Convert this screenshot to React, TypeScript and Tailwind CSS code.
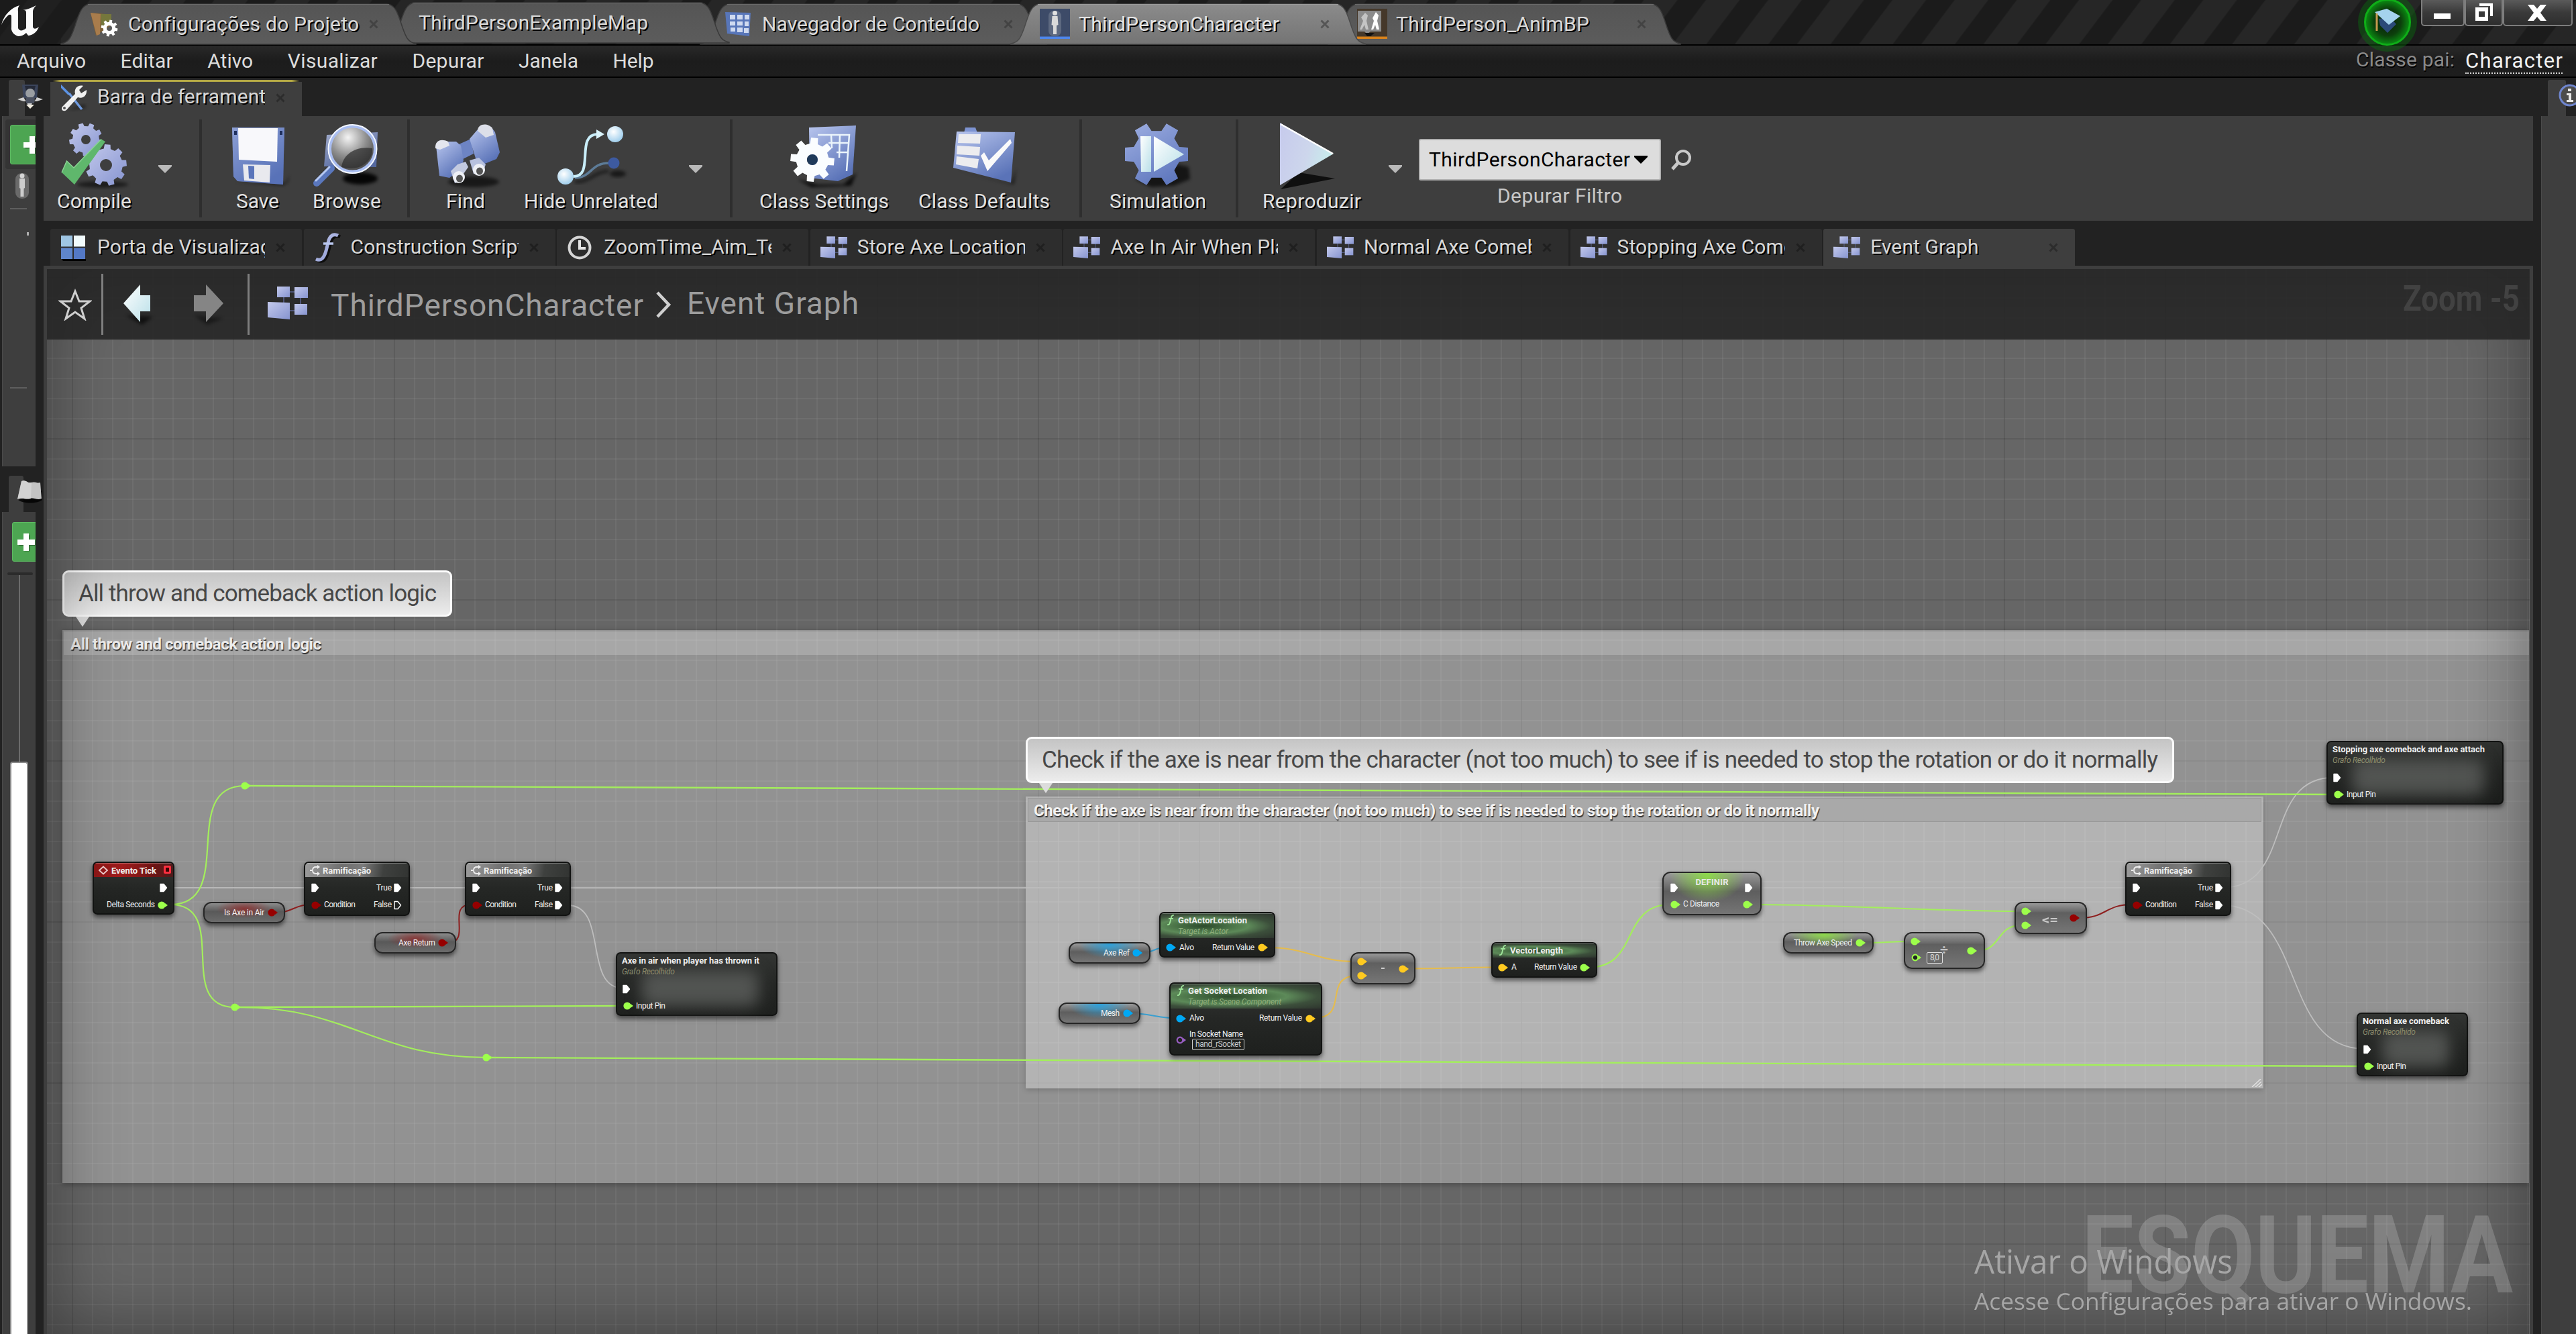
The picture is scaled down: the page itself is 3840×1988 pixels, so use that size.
import React, { useLayoutEffect, useRef, useState } from "react";

/* ---------- text fitted to a width ---------- */

function T({
  children,
  w,
  className = "",
  stretch = false,
  size,
}: {
  children: string;
  w: number;
  className?: string;
  stretch?: boolean;
  size?: number;
}) {
  const ref = useRef<HTMLSpanElement>(null);
  const [fit, setFit] = useState<{ ls: number; sx: number }>({ ls: 0, sx: 1 });
  useLayoutEffect(() => {
    if (!ref.current) return;
    const natural = ref.current.getBoundingClientRect().width;
    if (stretch) setFit({ ls: 0, sx: w / natural });
    else setFit({ ls: (w - natural) / Math.max(1, children.length - 1), sx: 1 });
  }, []);
  return (
    <span className={"block leading-none whitespace-nowrap " + className} style={{ width: w, fontSize: size }}>
      <span
        ref={ref}
        className="inline-block origin-left"
        style={{ letterSpacing: fit.ls, transform: fit.sx === 1 ? undefined : `scaleX(${fit.sx})` }}
      >
        {children}
      </span>
    </span>
  );
}

const SH = "[text-shadow:2px_2px_0_#000]";

/* ---------- icons ---------- */

function gear(cx: number, cy: number, r: number, n: number, depth = 0.2, off = 0) {
  const ri = r * (1 - depth);
  const step = (Math.PI * 2) / n;
  const p: string[] = [];
  for (let i = 0; i < n; i++) {
    const a = i * step + off;
    const pts: [number, number][] = [
      [a - step * 0.3, ri],
      [a - step * 0.2, r],
      [a + step * 0.2, r],
      [a + step * 0.3, ri],
    ];
    for (const [t, q] of pts) p.push(`${(cx + Math.cos(t) * q).toFixed(1)} ${(cy + Math.sin(t) * q).toFixed(1)}`);
  }
  return "M" + p.join("L") + "Z";
}

const Defs = () => (
  <svg className="absolute size-0">
    <defs>
      <linearGradient id="blu" x1="0" y1="0" x2="0.6" y2="1">
        <stop offset="0" stopColor="#b9c6ee" />
        <stop offset="1" stopColor="#5a73b8" />
      </linearGradient>
      <linearGradient id="lav" x1="0" y1="0" x2="1" y2="1">
        <stop offset="0" stopColor="#c3c9ec" />
        <stop offset="1" stopColor="#8694d0" />
      </linearGradient>
      <linearGradient id="ice" x1="0" y1="0" x2="1" y2="1">
        <stop offset="0" stopColor="#ffffff" />
        <stop offset="1" stopColor="#b9dfe8" />
      </linearGradient>
      <linearGradient id="play" x1="0" y1="0" x2="1" y2="0.3">
        <stop offset="0" stopColor="#c6caec" />
        <stop offset="0.6" stopColor="#cdd6ec" />
        <stop offset="1" stopColor="#c8ecec" />
      </linearGradient>
      <radialGradient id="lens" cx="0.4" cy="0.25" r="0.9">
        <stop offset="0" stopColor="#f4f4f4" />
        <stop offset="0.45" stopColor="#8f8f8f" />
        <stop offset="1" stopColor="#2a2a2a" />
      </radialGradient>
      <radialGradient id="ball" cx="0.4" cy="0.35" r="0.8">
        <stop offset="0" stopColor="#ffffff" />
        <stop offset="1" stopColor="#8cc4e8" />
      </radialGradient>
      <linearGradient id="tabA" x1="0" y1="0" x2="0" y2="1">
        <stop offset="0" stopColor="#8b8b8b" />
        <stop offset="1" stopColor="#747474" />
      </linearGradient>
      <linearGradient id="tabI" x1="0" y1="0" x2="0" y2="1">
        <stop offset="0" stopColor="#555555" />
        <stop offset="1" stopColor="#5c5c5c" />
      </linearGradient>
      <filter id="soft" x="-30%" y="-30%" width="160%" height="160%">
        <feGaussianBlur stdDeviation="2.5" />
      </filter>
    </defs>
  </svg>
);

const Ic = ({ children }: { children: React.ReactNode }) => (
  <svg viewBox="0 0 100 100" className="size-[100px] shrink-0 overflow-visible">
    {children}
  </svg>
);

const CompileIcon = () => (
  <Ic>
    <ellipse cx="62" cy="92" rx="38" ry="5" fill="#000" opacity=".55" filter="url(#soft)" />
    <path d={gear(37, 25, 25, 9, 0.2, 0.2) + "M44 25a7 7 0 1 0-14 0a7 7 0 1 0 14 0Z"} fill="url(#lav)" fillRule="evenodd" />
    <path d={gear(67, 63, 31, 9, 0.2, -0.1) + "M76 63a9 9 0 1 0-18 0a9 9 0 1 0 18 0Z"} fill="url(#lav)" fillRule="evenodd" />
    <path d="M1 74L8.500 57L19 67L60 24.500L66 28L20 92Z" fill="#5fb76c" />
    <path d="M1 74L8.500 57L19 67L60 24.500" fill="none" stroke="#8bd394" strokeWidth="1.500" />
  </Ic>
);
const SaveIcon = () => (
  <Ic>
    <path d="M16 88L90 93L98 78L94 90Z" fill="#000" opacity=".7" filter="url(#soft)" />
    <path d="M12 7H90L88 92L20 87L14 80Z" fill="url(#blu)" />
    <path d="M12 7H90L88 92L20 87L14 80Z" fill="#5672b8" opacity=".45" />
    <path d="M21 8H80L79 58L22 55Z" fill="#f8f8fb" />
    <path d="M28 62L69 63L68 89L30 86Z" fill="#e9e9ee" />
    <path d="M36 64L45 64.500L45 84L37 83Z" fill="#5a74ba" />
    <rect x="15" y="12" width="4" height="6" fill="#20305e" />
    <rect x="83" y="12" width="4" height="6" fill="#20305e" />
  </Ic>
);
const BrowseIcon = () => (
  <Ic>
    <ellipse cx="70" cy="83" rx="26" ry="9" fill="#000" opacity=".9" filter="url(#soft)" />
    <path d="M20 18L96 14L94 66L16 65Z" fill="url(#blu)" opacity=".8" />
    <path d="M5 90L27 68" stroke="#5a77bd" strokeWidth="10" strokeLinecap="round" />
    <path d="M4 86L24 66" stroke="#b5c8f2" strokeWidth="3" strokeLinecap="round" />
    <circle cx="58.500" cy="39" r="34" fill="url(#lens)" stroke="#a9bdf0" strokeWidth="5" />
    <circle cx="58.500" cy="39" r="36" fill="none" stroke="#f2f6ff" strokeWidth="2" />
    <path d="M42 66C44 48 62 34 88 38C90 56 70 74 42 66Z" fill="#2b2b2b" opacity=".7" />
  </Ic>
);
const FindIcon = () => (
  <Ic>
    <ellipse cx="62" cy="88" rx="38" ry="8" fill="#000" opacity=".6" filter="url(#soft)" />
    <path d="M40 32L58 24L62 46L46 54Z" fill="#6d84c4" />
    <path d="M6 34L12 28L36 28L43 34L47 56L42 70L26 82L11 79Z" fill="url(#blu)" />
    <path d="M5 38C4 26 14 23 24 28L26 34L12 40Z" fill="#e4e6ee" />
    <path d="M56 24L68 10L88 6L94 14L101 44L96 54L76 62L66 56Z" fill="url(#blu)" />
    <path d="M68 12C68 0 84 0 90 8L92 18L80 22Z" fill="#dcdfe9" />
    <path d="M28 72L38 62L50 58L54 66L47 76L47 86L34 90Z" fill="#c3cae0" />
    <path d="M56 56L70 52L80 62L76 74L62 76Z" fill="#b7c1de" />
    <ellipse cx="40" cy="81" rx="9" ry="9" fill="#eef0f5" />
    <ellipse cx="41" cy="83" rx="5" ry="5.500" fill="#555" />
    <ellipse cx="70" cy="70" rx="9" ry="9" fill="#eef0f5" />
    <ellipse cx="71" cy="72" rx="5" ry="5.500" fill="#555" />
  </Ic>
);
const HideIcon = () => (
  <Ic>
    <path d="M26 88C50 88 52 74 76 72" stroke="#000" opacity=".5" strokeWidth="5" fill="none" filter="url(#soft)" />
    <ellipse cx="90" cy="76" rx="12" ry="5" fill="#000" opacity=".6" filter="url(#soft)" />
    <path d="M26 82C50 82 50 60 76 60" stroke="#5d7c98" strokeWidth="3.500" fill="none" />
    <circle cx="84" cy="60" r="8.500" fill="#3d5aa0" />
    <path d="M24 80C56 80 26 17 60 17" stroke="#c9eefa" strokeWidth="4" fill="none" />
    <path d="M58 10L70 17L58 24Z" fill="#d9f3fb" />
    <circle cx="12" cy="80" r="12" fill="url(#ball)" />
    <circle cx="86" cy="17" r="12" fill="url(#ball)" />
  </Ic>
);
const SettingsIcon = () => (
  <Ic>
    <path d="M10 84L40 92L78 92L98 74L90 94L30 96Z" fill="#000" opacity=".8" filter="url(#soft)" />
    <path d="M27 7L97 4L92 77L70 87L28 82Z" fill="url(#blu)" />
    <path d="M40 18H87L83 72M60 18L61 38M73 18L72 52M56 30H86M68 44H85" stroke="#eaf4fb" strokeWidth="2.500" fill="none" />
    <path d={gear(32, 55, 33, 8, 0.26, 0.1) + "M40 55a8 8 0 1 0-16 0a8 8 0 1 0 16 0Z"} fill="#fafdff" fillRule="evenodd" />
    <circle cx="32" cy="55" r="8" fill="#1f3a5a" />
  </Ic>
);
const DefaultsIcon = () => (
  <Ic>
    <path d="M8 70L90 92L98 68L94 92Z" fill="#000" opacity=".7" filter="url(#soft)" />
    <path d="M20 15L22 7H37L40 15Z" fill="#7e94d2" />
    <path d="M9 13L96 14L90 89L4 67Z" fill="url(#blu)" />
    <path d="M12 17H45L44 31L11 30Z M10 34L44 36L43 49L9 47Z M9 50L42 54L40 68L8 62Z" fill="#ececef" />
    <path d="M45 49L50 44L57 56L89 24L91 30L55 72Z" fill="#fafafa" />
  </Ic>
);
const SimIcon = () => (
  <Ic>
    <path d="M16 84L40 96L74 94L98 84L96 66L80 62Z" fill="#000" opacity=".65" filter="url(#soft)" />
    <path d={gear(48, 47, 48, 6, 0.26, 0)} fill="url(#blu)" />
    <path d={gear(48, 47, 48, 6, 0.26, 0)} fill="#6d84cc" opacity=".35" />
    <path d="M24 20H40V73H25Z" fill="url(#ice)" />
    <path d="M44 20L89 47L44 73Z" fill="url(#ice)" />
  </Ic>
);
const PlayIcon = () => (
  <Ic>
    <path d="M3 99L84 83L30 74Z" fill="#000" opacity=".75" />
    <path d="M2 0L82 46L2 93Z" fill="url(#play)" />
    <path d="M3 2L81 46" stroke="#fff" strokeWidth="2.500" />
  </Ic>
);

const Blocks = ({ className }: { className: string }) => (
  <svg viewBox="0 0 60 50" className={className}>
    <path d="M33 8H40M33 36H40M24 16V24M49 16V26" stroke="#5a6390" strokeWidth="1.500" />
    <rect x="14" y="0" width="19" height="16" fill="url(#lav)" />
    <rect x="40" y="1" width="20" height="16" fill="url(#lav)" />
    <path d="M0 23L33 24V49L0 46Z" fill="url(#lav)" />
    <rect x="40" y="26" width="19" height="16" fill="url(#lav)" />
  </svg>
);
const PanesIcon = () => (
  <svg viewBox="0 0 40 40" className="size-10 overflow-visible">
    <path d="M2 37H38V40H4Z" fill="#000" />
    <rect x="1" y="2" width="17" height="16.500" fill="#9fc6e4" />
    <rect x="20" y="2" width="17" height="16.500" fill="#f1fbfd" />
    <rect x="1" y="20.500" width="17" height="16.500" fill="#5f86cc" />
    <rect x="20" y="20.500" width="17" height="16.500" fill="#5479c6" />
  </svg>
);
const FnIcon = () => (
  <svg viewBox="0 0 40 40" className="size-10 overflow-visible">
    <path d="M3 37C11 41 15 35 18 25L22 9C25 1 30 -1 36 2" stroke="#000" opacity=".7" strokeWidth="5" fill="none" transform="translate(3 2)" />
    <path d="M3 37C11 41 15 35 18 25L22 9C25 1 30 -1 36 2" stroke="url(#lav)" strokeWidth="5" fill="none" />
    <path d="M14 14H29" stroke="#b9c6ee" strokeWidth="3.500" />
  </svg>
);
const ClockIcon = () => (
  <svg viewBox="0 0 40 40" className="size-10 overflow-visible">
    <circle cx="19" cy="20" r="15.500" fill="none" stroke="#d5d5d5" strokeWidth="4" />
    <path d="M19 9V21H28" fill="none" stroke="#e4e4e4" strokeWidth="4" />
  </svg>
);
const ToolsIcon = () => (
  <svg viewBox="0 0 40 40" className="size-10 overflow-visible">
    <path d="M10 38L36 30L38 34Z" fill="#000" opacity=".6" filter="url(#soft)" />
    <path d="M1 0L14 13L12 16L1 5Z" fill="#5b93e6" />
    <path d="M13 13L32 37" stroke="#6f9be0" strokeWidth="3.500" />
    <path d="M3 33L22 14C20 6 26 0 34 2L28 8L31 13L39 8C40 16 34 22 26 19L9 38C5 41 0 38 3 33Z" fill="#f1f1f1" />
    <circle cx="6" cy="35" r="2" fill="#555" />
  </svg>
);
const CloseX = ({ className = "" }: { className?: string }) => (
  <svg viewBox="0 0 16 16" className={"size-4 shrink-0 " + className}>
    <path d="M2.500 2.500L13.500 13.500M13.500 2.500L2.500 13.500" stroke="currentColor" strokeWidth="3" />
  </svg>
);
const Caret = ({ className = "" }: { className?: string }) => (
  <svg viewBox="0 0 20 12" className={"h-3 w-5 shrink-0 " + className}>
    <path d="M0 0H20V2L10 12L0 2Z" fill="currentColor" />
  </svg>
);
const FolderIcon = () => (
  <svg viewBox="0 0 40 36" className="h-9 w-10 overflow-visible">
    <path d="M0 1L14 2L31 4L30 20L8 35Z" fill="#7d5f36" />
    <path d="M0 1L15 3L14 33L9 35Z" fill="#a87c4c" />
    <path d="M15 3L31 3L31 14L16 24Z" fill="#75773c" />
    <path d={gear(28, 24, 12.5, 8, 0.26, 0.2) + "M32 24a4 4 0 1 0-8 0a4 4 0 1 0 8 0Z"} fill="#fff" fillRule="evenodd" />
  </svg>
);
const BrowserIcon = () => (
  <svg viewBox="0 0 40 36" className="h-9 w-10 overflow-visible">
    <path d="M1 0L39 1L37 36L4 32Z" fill="#5876b9" />
    <path d="M8 4H16V11H8ZM19 4H27V11H19ZM30 4H37V11H30ZM8 14H16V20H8ZM19 14H27V20H19ZM30 14H36V21H30ZM9 23H16V29H9ZM19 23H27V30H19ZM29 24H36V31H29Z" fill="#cfdaf0" />
  </svg>
);
const PawnIcon = () => (
  <svg viewBox="0 0 45 45" className="size-[45px]">
    <rect width="45" height="45" fill="#3d4b68" />
    <rect x="13" y="3" width="19" height="38" rx="8" fill="#5d6980" />
    <circle cx="22.500" cy="6.500" r="3.500" fill="#e1e1e1" />
    <path d="M18.500 11H26.500L27.500 24L25 25V38H20V25L17.500 24Z" fill="#dadada" />
    <rect y="41.500" width="45" height="3.500" fill="#4e86ea" />
  </svg>
);
const AnimIcon = () => (
  <svg viewBox="0 0 45 45" className="size-[45px]">
    <rect width="45" height="45" fill="#45382a" />
    <path d="M1 3H36V34H20L15 38L11 34H1Z" fill="#8b8b8b" />
    <path d="M28 5L32 10L30 18L33 31H29L27 24L24 31H21L25 18L23 14Z" fill="#fff" />
    <path d="M12 6L16 10L14 18L17 31H13L11 24L7 31H4L9 18L6 13Z" fill="#c4c4c4" />
    <path d="M11 36H26L20 41H15Z" fill="#111" />
    <rect y="41.500" width="45" height="3.500" fill="#d8821c" />
  </svg>
);
const Logo = () => (
  <svg viewBox="0 0 60 60" className="h-[60px] w-[60px]">
    <path
      d="M2 37C6 22 16 12 29 8C26 12 27 15 27 18V42C29 47 34 46 39 42V19C39 15 37 15 34 15C42 14 48 11 54 8C50 12 49 15 49 18V40C50 44 54 43 58 40C55 48 48 53 42 53L39 49C35 53 31 54 27 54C20 52 16 46 17 40V25C17 21 14 21 11 24C7 28 4 32 2 37Z"
      fill="#fbfbfb"
    />
  </svg>
);

/* ---------- title bar ---------- */

function TitleTab({
  w,
  className,
  active = false,
  children,
}: {
  w: number;
  className: string;
  active?: boolean;
  children: React.ReactNode;
}) {
  return (
    <div className={"relative flex h-[61px] shrink-0 items-center " + className} style={{ width: w }}>
      <svg className="absolute inset-0 h-full w-full overflow-visible" viewBox={`0 0 ${w} 61`}>
        <path
          d={`M0 60C12 58 15 50 20 36C26 18 30 1 44 1H${w - 44}C${w - 30} 1 ${w - 26} 18 ${w - 20} 36C${w - 15} 50 ${w - 12} 58 ${w} 60V61H0Z`}
          fill={active ? "url(#tabA)" : "url(#tabI)"}
          stroke={active ? "#4a4a4a" : "#3a3a3a"}
          strokeWidth="1.500"
        />
        <path d={`M40 1.500H${w - 40}`} stroke={active ? "#9a9a9a" : "#6a6a6a"} strokeWidth="1" />
      </svg>
      {children}
    </div>
  );
}

function TitleBar() {
  return (
    <div className="relative flex h-[66px] shrink-0 items-end bg-[repeating-linear-gradient(127deg,#1b1b1b_0px,#1b1b1b_32px,#262626_34px,#262626_72px,#1b1b1b_74px)]">
      <div className="flex h-full w-[91px] items-start bg-[#1c1c1c]/60">
        <Logo />
      </div>
      <TitleTab w={529} className="z-[5] pl-11">
        <div className="relative">
          <FolderIcon />
        </div>
        <T w={343} className={"relative ml-4 text-[30px] text-[#dadada] " + SH}>Configurações do Projeto</T>
        <CloseX className="relative ml-[15px] text-[#434343]" />
      </TitleTab>
      <TitleTab w={512} className="z-[4] -ml-[45px] mb-[2px] pl-[49px]">
        <T w={342} className={"relative text-[30px] text-[#dadada] " + SH}>ThirdPersonExampleMap</T>
      </TitleTab>
      <TitleTab w={516} className="z-[3] -ml-[43px] pl-[36px]">
        <div className="relative">
          <BrowserIcon />
        </div>
        <T w={324} className={"relative ml-[16px] text-[30px] text-[#dadada] " + SH}>Navegador de Conteúdo</T>
        <CloseX className="relative ml-[35px] text-[#434343]" />
      </TitleTab>
      <TitleTab w={528} active className="z-[6] -ml-[53px] pl-[43px]">
        <div className="relative">
          <PawnIcon />
        </div>
        <T w={299} className={"relative ml-[13px] text-[30px] text-[#e4e4e4] " + SH}>ThirdPersonCharacter</T>
        <CloseX className="relative ml-[60px] text-[#555555]" />
      </TitleTab>
      <TitleTab w={525} className="z-[5] -ml-[55px] pl-[43px]">
        <div className="relative">
          <AnimIcon />
        </div>
        <T w={288} className={"relative ml-[13px] text-[30px] text-[#dadada] " + SH}>ThirdPerson_AnimBP</T>
        <CloseX className="relative ml-[70px] text-[#434343]" />
      </TitleTab>
      <div className="ml-auto flex h-full items-start pr-[5px]">
        <div className="relative z-10 h-[66px] w-[94px]">
          <svg viewBox="0 0 94 80" className="absolute top-0 left-0 h-20 w-[94px]">
            <defs>
              <radialGradient id="tut">
                <stop offset="0" stopColor="#0a1a0a" />
                <stop offset="0.6" stopColor="#0c400c" />
                <stop offset="1" stopColor="#0a8f12" />
              </radialGradient>
            </defs>
            <circle cx="44" cy="33" r="44" fill="#0c6a10" opacity=".45" />
            <circle cx="44" cy="33" r="33.500" fill="url(#tut)" stroke="#0fae18" strokeWidth="3" />
            <path d="M31 28L48 26L57 36L44 49L33 38Z" fill="#2b4a78" />
            <path d="M25 18L43 13L63 24L46 37Z" fill="#a5d3ee" />
            <path d="M28 20V46" stroke="#c79a4e" strokeWidth="3" />
          </svg>
        </div>
        {[
          { w: 65, icon: <path d="M19 20H44V28H19Z" fill="#fff" /> },
          { w: 57, icon: <path d="M22 5H42V24H38V9H22ZM16 11H35V31H16ZM21 17V25H30V17Z" fill="#fff" fillRule="evenodd" /> },
          { w: 104, icon: <path d="M37 7H46L51 13L56 7H65L56 19L65 31H56L51 25L46 31H37L46 19Z" fill="#fff" /> },
        ].map((b, i) => (
          <div
            key={i}
            className="h-[39px] rounded-b-[5px] border-2 border-t-0 border-[#7d7d7d] bg-gradient-to-b from-[#5a5a5a] via-[#3a3a3a] to-[#2e2e2e]"
            style={{ width: b.w }}
          >
            <svg className="-ml-[2px] block h-[37px] overflow-visible" style={{ width: b.w }} viewBox={`0 0 ${b.w} 37`}>
              {b.icon}
            </svg>
          </div>
        ))}
      </div>
    </div>
  );
}

const MENU: [string, number][] = [
  ["Arquivo", 103],
  ["Editar", 78],
  ["Ativo", 68],
  ["Visualizar", 134],
  ["Depurar", 107],
  ["Janela", 89],
  ["Help", 61],
];

function MenuBar() {
  return (
    <div className="flex h-[50px] shrink-0 items-center gap-[51.600px] border-y-2 border-black bg-gradient-to-b from-[#292929] via-[#1c1c1c] to-[#1e1e1e] pr-[20px] pl-[25px]">
      {MENU.map(([t, w]) => (
        <T key={t} w={w} className="text-[30px] text-[#dcdcdc]">
          {t}
        </T>
      ))}
      <div className="ml-auto flex items-center gap-[16px]">
        <T w={147} className="-mt-[4px] text-[30px] text-[#8a8a8a] [text-shadow:1px_2px_0_#000]">Classe pai:</T>
        <div className="mt-[2px] border-b-2 border-dotted border-[#d8d8d8] pb-[2px]">
          <T w={145} className="text-[31px] text-[#f2f2f2]">Character</T>
        </div>
      </div>
    </div>
  );
}

/* ---------- toolbar ---------- */

function Tool({ icon, label, lw, className }: { icon: React.ReactNode; label: string; lw: number; className: string }) {
  return (
    <div className={"flex shrink-0 flex-col items-center pt-[10px] " + className}>
      {icon}
      <T w={lw} className={"mt-[2px] text-[30px] text-[#e2e2e2] " + SH}>{label}</T>
    </div>
  );
}
const Sep = ({ className }: { className: string }) => (
  <div className={"mt-[5px] h-[146px] w-1 shrink-0 bg-[#2e2e2e] " + className} />
);

function Toolbar() {
  return (
    <div className="flex h-[156px] w-[3711px] shrink-0 bg-[#3e3e3e]">
      <Tool icon={<CompileIcon />} label="Compile" lw={111} className="ml-[20px] w-[111px]" />
      <Caret className="mt-[73px] ml-[40px] text-[#b9b9b9]" />
      <Sep className="ml-[41px]" />
      <Tool icon={<SaveIcon />} label="Save" lw={64} className="ml-[33px] w-[100px]" />
      <Tool icon={<BrowseIcon />} label="Browse" lw={102} className="ml-[31px] w-[104px]" />
      <Sep className="ml-[38px]" />
      <Tool icon={<FindIcon />} label="Find" lw={58} className="ml-[33px] w-[100px]" />
      <Tool icon={<HideIcon />} label="Hide Unrelated" lw={200} className="ml-[37px] w-[200px]" />
      <Caret className="mt-[73px] ml-[46px] text-[#b9b9b9]" />
      <Sep className="ml-[41px]" />
      <Tool icon={<SettingsIcon />} label="Class Settings" lw={193} className="ml-[40px] w-[193px]" />
      <Tool icon={<DefaultsIcon />} label="Class Defaults" lw={196} className="ml-[44px] w-[196px]" />
      <Sep className="ml-[44px]" />
      <Tool icon={<SimIcon />} label="Simulation" lw={144} className="ml-[41px] w-[144px]" />
      <Sep className="ml-[44px]" />
      <Tool icon={<PlayIcon />} label="Reproduzir" lw={147} className="ml-[36px] w-[147px]" />
      <Caret className="mt-[73px] ml-[41px] text-[#b9b9b9]" />
      <div className="ml-[25px] flex w-[420px] flex-col pt-[34px]">
        <div className="flex items-center">
          <div className="flex h-[62px] w-[361px] shrink-0 items-center rounded-[3px] border-2 border-[#b0b0b0] bg-[#dddddd] pl-[13px]">
            <T w={300} className="text-[30px] text-black">ThirdPersonCharacter</T>
            <Caret className="ml-[6px] text-black" />
          </div>
          <svg viewBox="0 0 32 32" className="ml-[14px] h-8 w-8">
            <circle cx="19" cy="13" r="10" fill="none" stroke="#c9c9c9" strokeWidth="4" />
            <path d="M12 20L3 30" stroke="#c9c9c9" strokeWidth="5" />
          </svg>
        </div>
        <T w={186} className="mt-[8px] self-center text-[30px] text-[#c8c8c8]">Depurar Filtro</T>
      </div>
    </div>
  );
}

function GraphTab({ icon, label, active = false }: { icon: React.ReactNode; label: string; active?: boolean }) {
  return (
    <div
      className={
        "mr-[2.600px] flex h-full w-[375px] shrink-0 items-center rounded-t-[3px] pl-[15px] " +
        (active ? "bg-[#3e3e3e]" : "bg-[#2d2d2d]")
      }
    >
      {icon}
      <div className="ml-[15px] h-9 w-[250px] overflow-hidden">
        <span className={"block pt-[2px] text-[30px] leading-none tracking-[0.1px] whitespace-nowrap text-[#d8d8d8] " + SH}>
          {label}
        </span>
      </div>
      <CloseX className={"ml-[15px] " + (active ? "text-[#2c2c2c]" : "text-[#1f1f1f]")} />
    </div>
  );
}

/* ---------- graph pieces ---------- */

const GREEN = "#9dff4b";
const RED = "#960000";
const BLUE = "#00a8f5";
const GOLD = "#ffca20";

function L({
  x,
  b,
  w,
  s = 12,
  className = "text-[#f2f2f2]",
  children,
  stretch,
}: {
  x: number;
  b: number;
  w: number;
  s?: number;
  className?: string;
  children: string;
  stretch?: boolean;
}) {
  return (
    <div className={"absolute " + className} style={{ left: x, top: b - 0.841 * s }}>
      <T w={w} size={s} stretch={stretch}>
        {children}
      </T>
    </div>
  );
}

const Pin = ({ x, y, c, hollow = false }: { x: number; y: number; c: string; hollow?: boolean }) => (
  <svg className="absolute h-4 w-5 overflow-visible" style={{ left: x - 8, top: y - 8 }} viewBox="-8 -8 20 16">
    {hollow ? (
      <circle r="4.300" fill="#222" stroke={c} strokeWidth="2.200" />
    ) : (
      <circle r="5.600" fill={c} />
    )}
    <path d="M5 -3L9 0L5 3Z" fill={c} />
  </svg>
);
const Exec = ({ x, y, hollow = false }: { x: number; y: number; hollow?: boolean }) => (
  <svg className="absolute h-[14px] w-[14px] overflow-visible" style={{ left: x, top: y - 7 }} viewBox="0 -7 14 14">
    <path d="M1 -5.500H6L10.500 0L6 5.500H1Z" fill={hollow ? "none" : "#fff"} stroke="#fff" strokeWidth="1.400" strokeLinejoin="round" />
  </svg>
);

function Node({ x, y, w, h, header, hh = 23, children }: {
  x: number; y: number; w: number; h: number; header?: string; hh?: number; children?: React.ReactNode;
}) {
  return (
    <>
      <div
        className="absolute overflow-hidden rounded-[7px] border-2 border-[#121312] bg-gradient-to-b from-[#333533] via-[#252725] to-[#1e201e] shadow-[0_4px_7px_rgba(0,0,0,0.55)]"
        style={{ left: x, top: y, width: w, height: h }}
      >
        {header && <div className={"border-t border-white/30 " + header} style={{ height: hh - 2 }} />}
      </div>
      {children}
    </>
  );
}

const H_RED = "bg-[linear-gradient(100deg,#8d1616_0%,#a01c1c_35%,#6d1414_75%,#4b1c1c_100%)]";
const H_GREY = "bg-[linear-gradient(100deg,#9c9c9c_0%,#6f6f6f_35%,#7b7b7b_55%,#3f413f_75%,#323432_100%)]";
const H_GREEN = "bg-[radial-gradient(ellipse_at_38%_50%,#2d4a2c_0%,#4a7347_28%,#5d8a59_45%,#3c4f3b_68%,#2e352e_100%)]";

const PILLS = {
  red: "bg-[radial-gradient(ellipse_at_50%_30%,rgba(140,45,45,0.85)_0%,rgba(120,60,60,0)_50%),linear-gradient(#8c8c8c_0%,#595959_45%,#6b6b6b_100%)]",
  blue: "bg-[radial-gradient(ellipse_at_50%_5%,rgba(40,160,220,0.95)_0%,rgba(60,120,150,0)_55%),linear-gradient(#9a9a9a_0%,#5e5e5e_45%,#757575_100%)]",
  green: "bg-[radial-gradient(ellipse_at_45%_5%,rgba(140,220,70,0.95)_0%,rgba(100,140,80,0)_50%),linear-gradient(#9a9a9a_0%,#5e5e5e_45%,#757575_100%)]",
  plain: "bg-[linear-gradient(#999_0%,#6a6a6a_28%,#5f5f5f_32%,#767676_100%)]",
};
function Pill({ x, y, w, h = 32, kind }: { x: number; y: number; w: number; h?: number; kind: keyof typeof PILLS }) {
  return (
    <div
      className={"absolute rounded-[12px] border-2 border-[#262626] shadow-[0_4px_6px_rgba(0,0,0,0.5)] " + PILLS[kind]}
      style={{ left: x, top: y, width: w, height: h }}
    />
  );
}

function Branch({ x, falseFilled = true }: { x: number; falseFilled?: boolean }) {
  return (
    <Node x={x} y={1284} w={158} h={81} header={H_GREY}>
      <svg className="absolute h-4 w-4" style={{ left: x + 8, top: 1289 }} viewBox="0 0 16 16">
        <path d="M1 8H4M15 3H10C6 3 5 5 5 8S6 13 10 13H15" stroke="#eee" strokeWidth="1.800" fill="none" />
        <path d="M12 0L16 3L12 6ZM12 10L16 13L12 16Z" fill="#eee" />
      </svg>
      <L x={x + 28} b={1301.500} w={72} s={13} className="font-bold text-[#efefef]">Ramificação</L>
      <Exec x={x + 11} y={1323} />
      <Pin x={x + 17} y={1348.500} c={RED} />
      <L x={x + 30} b={1352} w={47}>Condition</L>
      <L x={x + 108} b={1327} w={23}>True</L>
      <Exec x={x + 134} y={1323} />
      <L x={x + 104} b={1352.500} w={27}>False</L>
      <Exec x={x + 134} y={1349} hollow={!falseFilled} />
    </Node>
  );
}

function Collapsed({ x, y, w, title, tw }: { x: number; y: number; w: number; title: string; tw: number }) {
  return (
    <Node x={x} y={y} w={w} h={95}>
      <div
        className="absolute rounded-[14px] bg-[#575957]/90 blur-[11px]"
        style={{ left: x + 38, top: y + 27, width: w - 66, height: 54 }}
      />
      <L x={x + 9} b={y + 17} w={tw} s={13} className="font-bold text-[#efefef]">{title}</L>
      <L x={x + 9} b={y + 33} w={79} className="text-[#8b8b6c] italic">Grafo Recolhido</L>
      <Exec x={x + 10} y={y + 54.5} />
      <Pin x={x + 17} y={y + 80} c={GREEN} />
      <L x={x + 30} b={y + 84} w={44}>Input Pin</L>
    </Node>
  );
}

const FnMark = ({ x, y }: { x: number; y: number }) => (
  <svg className="absolute h-4 w-3 overflow-visible" style={{ left: x, top: y }} viewBox="0 0 12 16">
    <path d="M1 15C4 16 5 13 6 8C7 3 8 0 11 1M3 6H10" stroke="#9fe69a" strokeWidth="1.800" fill="none" />
  </svg>
);

function wire(x1: number, y1: number, x2: number, y2: number, k?: number) {
  const d = k ?? Math.max(20, Math.abs(x2 - x1) * 0.5);
  return `M${x1} ${y1}C${x1 + d} ${y1} ${x2 - d} ${y2} ${x2} ${y2}`;
}

const WIRES: { d: string; c: string; w: number }[] = [
  { d: wire(250, 1323, 464, 1323), c: "#b8b8b8", w: 2 },
  { d: wire(600, 1323, 704, 1323), c: "#b8b8b8", w: 2 },
  { d: wire(840, 1323, 1529, 1323), c: "#b4b4b4", w: 2.5 },
  { d: wire(1529, 1323, 2490, 1323), c: "#bcbcbc", w: 2 },
  { d: wire(2612, 1323, 3180, 1323), c: "#bcbcbc", w: 2 },
  { d: wire(846, 1349, 930, 1473, 62), c: "#bdbdbd", w: 1.8 },
  { d: wire(3312, 1323, 3480, 1158.5, 110), c: "#bdbdbd", w: 1.8 },
  { d: wire(3312, 1349, 3524, 1563, 125), c: "#bdbdbd", w: 1.8 },
  { d: wire(254, 1348, 365, 1171, 100), c: "#a3ee5c", w: 2.2 },
  { d: wire(254, 1348, 350, 1501, 90), c: "#a3ee5c", w: 2.2 },
  { d: `M370 1171L3484 1184`, c: "#a3ee5c", w: 2.4 },
  { d: `M356 1501L935 1499`, c: "#a3ee5c", w: 2.4 },
  { d: wire(356, 1501, 725, 1576, 165), c: "#a3ee5c", w: 2.2 },
  { d: `M730 1576L3529 1589`, c: "#a3ee5c", w: 2.4 },
  { d: wire(413, 1360, 462, 1348, 22), c: "#8e1f1f", w: 2 },
  { d: wire(667, 1405, 702, 1348, 38), c: "#8e1f1f", w: 2 },
  { d: wire(3100, 1368, 3178, 1348, 40), c: "#8e1f1f", w: 2 },
  { d: wire(1702, 1420, 1738, 1412, 18), c: "#3a9fd0", w: 2 },
  { d: wire(1688, 1510, 1752, 1517.5, 20), c: "#3a9fd0", w: 2 },
  { d: wire(1889, 1412, 2022, 1433, 60), c: "#e6bc4c", w: 2 },
  { d: wire(1959, 1517, 2024, 1454, 55), c: "#e6bc4c", w: 2 },
  { d: wire(2098, 1443.5, 2232, 1441.5), c: "#e6bc4c", w: 2 },
  { d: wire(2369, 1441.5, 2490, 1348, 75), c: "#a3ee5c", w: 2.2 },
  { d: wire(2612, 1348, 3012, 1358, 130), c: "#a3ee5c", w: 2.2 },
  { d: wire(2780, 1405, 2848, 1403), c: "#a3ee5c", w: 2.2 },
  { d: wire(2947, 1417, 3012, 1379, 36), c: "#a3ee5c", w: 2.2 },
];

function Bubble({ x, y, w, tw, children }: { x: number; y: number; w: number; tw: number; children: string }) {
  return (
    <>
      <div
        className="absolute rounded-[9px] border-[3px] border-white/90 bg-gradient-to-b from-[#c4c4c4] to-[#ececec]"
        style={{ left: x, top: y, width: w, height: 69 }}
      />
      <svg className="absolute h-4 w-5" style={{ left: x + 20, top: y + 69 }} viewBox="0 0 20 16">
        <path d="M0 0H20L10 15Z" fill="#dcdcdc" />
      </svg>
      <L x={x + 24} b={y + 46} w={tw} s={35} className="text-[#484848]">
        {children}
      </L>
    </>
  );
}

function Graph() {
  return (
    <div className="absolute top-[-401px] left-[-70px] h-[1988px] w-[3840px]">
      {/* comment boxes */}
      <div className="absolute top-[939px] left-[93px] h-[824px] w-[3677px] bg-white/29 shadow-[0_2px_8px_rgba(0,0,0,0.35)]">
        <div className="mt-[2px] ml-[2px] h-[35px] bg-white/20" />
      </div>
      <L x={105} b={968} w={374} s={24} className="font-bold text-[#ececec] [text-shadow:1px_2px_1px_#333]">All throw and comeback action logic</L>
      <div className="absolute top-[1187px] left-[1529px] h-[435px] w-[1845px] bg-white/31 shadow-[0_2px_8px_rgba(0,0,0,0.2)]">
        <div className="mx-[3px] mt-[2px] h-[36px] border border-[#979797] bg-[#a9a9a9]" />
        <svg className="absolute right-[2px] bottom-[2px] h-3 w-4" viewBox="0 0 16 12">
          <path d="M1 12L14 0M6 12L15 4M11 12L16 8" stroke="#e2e2e2" strokeWidth="1.500" />
        </svg>
      </div>
      <L x={1541} b={1216} w={1171} s={24} className="font-bold text-[#f2f2f2] [text-shadow:1px_2px_1px_#333]">
        Check if the axe is near from the character (not too much) to see if is needed to stop the rotation or do it normally
      </L>

      {/* wires */}
      <svg className="absolute inset-0" viewBox="0 0 3840 1988" width="3840" height="1988">
        {WIRES.map((k, i) => (
          <path key={i} d={k.d} stroke={k.c} strokeWidth={k.w} fill="none" />
        ))}
      </svg>
      <Pin x={365} y={1171} c={GREEN} />
      <Pin x={350} y={1501} c={GREEN} />
      <Pin x={725} y={1576} c={GREEN} />

      <Bubble x={93} y={850} w={581} tw={534}>All throw and comeback action logic</Bubble>
      <Bubble x={1529} y={1098} w={1712} tw={1664}>
        Check if the axe is near from the character (not too much) to see if is needed to stop the rotation or do it normally
      </Bubble>

      {/* event */}
      <Node x={138} y={1284} w={122} h={79} header={H_RED}>
        <svg className="absolute top-[1289px] left-[146px] h-4 w-4" viewBox="0 0 16 16">
          <path d="M2 8L8 2.500L14 8L8 13.500Z" fill="none" stroke="#f0d0d0" strokeWidth="1.800" />
        </svg>
        <L x={166} b={1301.500} w={67} s={13} className="font-bold text-[#efefef]">Evento Tick</L>
        <div className="absolute top-[1290px] left-[244px] h-[12px] w-[11px] rounded-[2px] border-[3px] border-[#ff2f3f] bg-[#3a0505]" />
        <Exec x={238} y={1323} />
        <L x={159} b={1352} w={72}>Delta Seconds</L>
        <Pin x={241} y={1348.500} c={GREEN} />
      </Node>

      <Pill x={303} y={1344} w={122} kind="red" />
      <L x={334} b={1364} w={60}>Is Axe in Air</L>
      <Pin x={405} y={1360} c={RED} />
      <Branch x={453} falseFilled={false} />
      <Pill x={558} y={1389} w={122} kind="red" />
      <L x={594} b={1409} w={55}>Axe Return</L>
      <Pin x={659} y={1405} c={RED} />
      <Branch x={693} />
      <Collapsed x={918} y={1419} w={241} title="Axe in air when player has thrown it" tw={205} />

      {/* location functions */}
      <Pill x={1593} y={1404} w={122} kind="blue" />
      <L x={1645} b={1424} w={39}>Axe Ref</L>
      <Pin x={1694} y={1420} c={BLUE} />
      <Node x={1728} y={1359} w={173} h={68} header={H_GREEN} hh={39}>
        <FnMark x={1739} y={1363} />
        <L x={1756} b={1376} w={103} s={13} className="font-bold text-[#efefef]">GetActorLocation</L>
        <L x={1756} b={1392} w={75} className="text-[#8fae7c] italic">Target is Actor</L>
        <Pin x={1744} y={1412} c={BLUE} />
        <L x={1758} b={1416} w={22}>Alvo</L>
        <L x={1807} b={1416} w={63}>Return Value</L>
        <Pin x={1880.500} y={1412} c={GOLD} />
      </Node>
      <Pill x={1578} y={1494} w={122} kind="blue" />
      <L x={1641} b={1514} w={28}>Mesh</L>
      <Pin x={1680} y={1510} c={BLUE} />
      <Node x={1743} y={1464} w={228} h={109} header={H_GREEN} hh={39}>
        <FnMark x={1754} y={1468} />
        <L x={1771} b={1481} w={118} s={13} className="font-bold text-[#efefef]">Get Socket Location</L>
        <L x={1771} b={1497} w={139} className="text-[#8fae7c] italic">Target is Scene Component</L>
        <Pin x={1759} y={1517.5} c={BLUE} />
        <L x={1773} b={1521} w={22}>Alvo</L>
        <L x={1877} b={1521} w={64}>Return Value</L>
        <Pin x={1951.5} y={1517.5} c={GOLD} />
        <L x={1773} b={1545} w={80}>In Socket Name</L>
        <Pin x={1759} y={1550} c="#9a5fc4" hollow />
        <div className="absolute top-[1548px] left-[1777px] h-[17px] w-[78px] rounded-[2px] border border-[#d0d0d0]" />
        <L x={1782} b={1560} w={68} className="text-[#c8c8c8]">hand_rSocket</L>
      </Node>
      <Pill x={2013} y={1419} w={97} h={48} kind="plain" />
      <Pin x={2029} y={1433} c={GOLD} />
      <Pin x={2029} y={1454} c={GOLD} />
      <Pin x={2090.5} y={1443.5} c={GOLD} />
      <L x={2057.500} b={1449} w={7} s={18} stretch className="font-bold text-[#cccccc]">-</L>
      <Node x={2223} y={1404} w={158} h={53} header={H_GREEN}>
        <FnMark x={2234} y={1408} />
        <L x={2251} b={1421} w={79} s={13} className="font-bold text-[#efefef]">VectorLength</L>
        <Pin x={2239} y={1441.5} c={GOLD} />
        <L x={2253} b={1445.500} w={8}>A</L>
        <L x={2287} b={1445.500} w={64}>Return Value</L>
        <Pin x={2361} y={1441.5} c={GREEN} />
      </Node>

      {/* distance check */}
      <Pill x={2478} y={1299} w={148} h={65} kind="green" />
      <L x={2527.500} b={1318.500} w={49} s={13} className="font-bold text-[#e8e8e8]">DEFINIR</L>
      <Exec x={2490} y={1323} />
      <Exec x={2601} y={1323} />
      <Pin x={2496} y={1348} c={GREEN} />
      <L x={2509} b={1351.500} w={54}>C Distance</L>
      <Pin x={2604} y={1348} c={GREEN} />
      <Pill x={2658} y={1389} w={135} kind="green" />
      <L x={2674} b={1409} w={87}>Throw Axe Speed</L>
      <Pin x={2772} y={1405} c={GREEN} />
      <Pill x={2838} y={1389} w={121} h={55} kind="plain" />
      <Pin x={2854} y={1403} c={GREEN} />
      <Pin x={2855} y={1427} c={GREEN} hollow />
      <L x={2892} b={1423} w={11} s={21} className="font-bold text-[#c4c4c4]">÷</L>
      <div className="absolute top-[1419px] left-[2872px] h-[17px] w-[24px] rounded-[2px] border border-[#e0e0e0] bg-[#6b6b6b]" />
      <L x={2877} b={1431.500} w={14} className="text-[#d8d8d8]">8,0</L>
      <Pin x={2938} y={1417} c={GREEN} />
      <Pill x={3003} y={1344} w={108} h={48} kind="plain" />
      <Pin x={3019} y={1358} c={GREEN} />
      <Pin x={3019} y={1379} c={GREEN} />
      <L x={3044} b={1376.500} w={24} s={19} stretch className="font-bold text-[#c8c8c8]">{"<="}</L>
      <Pin x={3091} y={1368} c={RED} />
      <Branch x={3168} />
      <Collapsed x={3468} y={1104} w={264} title="Stopping axe comeback and axe attach" tw={227} />
      <Collapsed x={3513} y={1509} w={166} title="Normal axe comeback" tw={129} />

      {/* edge shading */}
      <div className="pointer-events-none absolute top-[401px] left-[70px] h-[1587px] w-[3700px] shadow-[inset_0_0_110px_rgba(0,0,0,0.42)]" />

      {/* watermarks */}
      <L x={3103} b={1926.500} w={643} s={162} stretch className="font-bold text-white/18">ESQUEMA</L>
      <div className="absolute top-[1855px] left-[2943px] font-['Open_Sans','Noto_Sans',sans-serif] text-[#a6a6a6]">
        <T w={385} size={49} stretch>Ativar o Windows</T>
        <div className="mt-[17px]">
          <T w={742} size={35} stretch>Acesse Configurações para ativar o Windows.</T>
        </div>
      </div>
    </div>
  );
}

/* ---------- side strips ---------- */

const Plus = ({ className }: { className: string }) => (
  <svg viewBox="0 0 28 28" className={"size-7 shrink-0 " + className}>
    <path d="M10 2H18V10H26V18H18V26H10V18H2V10H10Z" fill="#000" opacity=".35" transform="translate(1.500 1.500)" />
    <path d="M10 1H18V10H27V18H18V27H10V18H1V10H10Z" fill="#fff" />
  </svg>
);

function LeftStrip() {
  return (
    <div className="flex w-[65px] shrink-0 flex-col pl-[3px]">
      <div className="mt-[3px] ml-[10px] flex h-[54px] items-start">
        <div className="h-full w-[27px] rounded-t-[3px] bg-[#3e3e3e]" />
        <svg viewBox="0 0 40 40" className="mt-[5px] -ml-3 size-10 shrink-0">
          <path d="M8 2H32L30 22H10Z" fill="#3b455c" />
          <path d="M12 4H28L26 12H14Z" fill="#252a38" />
          <circle cx="20" cy="15" r="7" fill="#9a9ea2" />
          <path d="M1 24L10 21L13 26H27L30 21L39 24L30 27H24L22 32L20 38L16 32L15 27H10Z" fill="#d0d0d0" />
          <path d="M13 21H27L26 30H14Z" fill="#4b5160" />
          <path d="M14 32H26L20 38Z" fill="#f0ece0" />
        </svg>
      </div>
      <div className="flex h-[522px] w-[50px] flex-col overflow-hidden border-l border-[#4a4a4a] bg-[#3e3e3e]">
        <div className="mt-[5px] ml-[4px] h-[74px] w-[46px] rounded-[4px] bg-[#343434] pt-2 pl-[7px]">
          <div className="flex h-[59px] w-[60px] items-center rounded-[3px] border border-[#5dbb62] bg-[#4da552]">
            <Plus className="ml-[18px]" />
          </div>
        </div>
        <svg viewBox="0 0 22 42" className="mt-[4px] ml-[18px] h-[42px] w-[22px]">
          <rect x="1" y="2" width="20" height="38" rx="9" fill="#6a6a6a" />
          <circle cx="11" cy="6" r="3.500" fill="#d5d5d5" />
          <path d="M7 10H15V24L13.500 25V37H8.500V25L7 24Z" fill="#cccccc" />
        </svg>
        <div className="mt-[12px] ml-[11px] h-[2px] w-[25px] bg-[#5e5e5e]" />
        <div className="mt-[34px] ml-[36px] h-[5px] w-[3px] bg-[#b0b0b0]" />
        <div className="mt-[226px] ml-[11px] h-[2px] w-[25px] bg-[#5e5e5e]" />
      </div>
      <div className="mt-[14px] ml-[10px] flex h-[54px] items-start">
        <div className="h-full w-[27px] rounded-t-[3px] bg-[#3e3e3e]" />
        <svg viewBox="0 0 40 40" className="mt-[2px] -ml-[10px] size-10 shrink-0 overflow-visible">
          <path d="M2 34C10 40 30 40 38 34L38 20Z" fill="#000" opacity=".8" />
          <path d="M7 6C14 3 16 10 22 8C28 6 30 10 35 8L37 32C30 35 26 30 20 32C14 34 8 30 1 33Z" fill="#c4c4c4" />
          <path d="M7 6C14 3 16 10 22 8L21 32C14 34 8 30 1 33Z" fill="#dedede" opacity=".6" />
        </svg>
      </div>
      <div className="flex w-[50px] grow flex-col overflow-hidden border-l border-[#4a4a4a] bg-[#3e3e3e] pl-[11px]">
        <div className="mt-[15px] ml-[3px] flex h-[59px] w-[60px] shrink-0 items-center rounded-[3px] border border-[#5dbb62] bg-[#4da552]">
          <Plus className="ml-[6px]" />
        </div>
        <div className="mt-[16px] -ml-1 h-[4px] w-[38px] shrink-0 rounded-full bg-[#2b2b2b]" />
        <div className="ml-[13px] h-[278px] w-[2px] shrink-0 bg-[#6b6b6b]" />
        <div className="w-[27px] grow rounded-t-[4px] border-2 border-b-0 border-[#8a8a8a] bg-white" />
      </div>
    </div>
  );
}

/* ---------- page ---------- */

export default function App() {
  const blk = <Blocks className="h-[34px] w-10 overflow-visible" />;
  return (
    <div className="relative flex h-[1988px] w-[3840px] flex-col overflow-hidden bg-[#222222] font-['Roboto',sans-serif]">
      <Defs />
      <TitleBar />
      <MenuBar />
      <div className="flex min-h-0 grow">
        <LeftStrip />
        <div className="flex w-[3711px] shrink-0 flex-col">
          <div className="mt-[3px] ml-[10px] flex h-[54px] w-[375px] shrink-0 items-center rounded-t-[3px] bg-[linear-gradient(90deg,transparent_1%,#b5a945_4%,#b5a945_96%,transparent_99%)] bg-[length:100%_3px] bg-no-repeat">
            <div className="mt-[3px] flex h-[51px] w-full items-center bg-[#3e3e3e] pb-[3px] pl-[15px]">
              <ToolsIcon />
              <div className="ml-[15px] h-9 w-[250px] overflow-hidden">
                <span className={"block pt-[1px] text-[30px] leading-none tracking-[0.1px] whitespace-nowrap text-[#d8d8d8] " + SH}>
                  Barra de ferramentas
                </span>
              </div>
              <CloseX className="ml-[15px] text-[#2c2c2c]" />
            </div>
          </div>
          <Toolbar />
          <div className="mt-3 ml-[10px] flex h-[55px] shrink-0">
            <GraphTab icon={<PanesIcon />} label="Porta de Visualização" />
            <GraphTab icon={<FnIcon />} label="Construction Script" />
            <GraphTab icon={<ClockIcon />} label="ZoomTime_Aim_Te" />
            <GraphTab icon={blk} label="Store Axe Location" />
            <GraphTab icon={blk} label="Axe In Air When Player" />
            <GraphTab icon={blk} label="Normal Axe Comeback" />
            <GraphTab icon={blk} label="Stopping Axe Comeback" />
            <GraphTab icon={blk} label="Event Graph" active />
          </div>
          <div className="grow bg-[#3e3e3e] px-[5px] pt-[5px]">
            <div className="relative h-[1587px] w-full overflow-hidden bg-[#666666]">
              <div className="absolute inset-0 bg-[linear-gradient(90deg,rgba(0,0,0,0.16)_2px,transparent_2px),linear-gradient(rgba(0,0,0,0.16)_2px,transparent_2px),linear-gradient(90deg,rgba(255,255,255,0.05)_2px,transparent_2px),linear-gradient(rgba(255,255,255,0.05)_2px,transparent_2px)] bg-[size:240px_240px,240px_240px,30px_30px,30px_30px] bg-[position:37px_0px,0px_12px,7px_0px,0px_12px]" />
              <Graph />
              <div className="relative flex h-[105px] items-center bg-[#242424]/88">
                <svg viewBox="0 0 50 48" className="ml-[17px] h-12 w-[50px]">
                  <path d="M25 4L31 19H47L34 29L39 45L25 35L11 45L16 29L3 19H19Z" fill="none" stroke="#cfcfcf" strokeWidth="3" />
                </svg>
                <div className="ml-[14px] h-[91px] w-[3px] bg-[#7e7e7e]" />
                <svg viewBox="0 0 44 60" className="ml-[30px] h-[60px] w-[44px] overflow-visible">
                  <path d="M4 46L28 60L44 48Z" fill="#000" opacity=".6" filter="url(#soft)" />
                  <path d="M0 28L25 0V16H40V40H25V56Z" fill="url(#ice)" />
                </svg>
                <svg viewBox="0 0 44 60" className="ml-[61px] h-[60px] w-[44px] overflow-visible">
                  <path d="M0 46L20 60L44 50Z" fill="#000" opacity=".4" filter="url(#soft)" />
                  <path d="M44 28L18 0V16H0V40H18V56Z" fill="#858585" />
                </svg>
                <div className="ml-[36px] h-[91px] w-[3px] bg-[#7e7e7e]" />
                <Blocks className="mb-[4px] ml-[27px] h-[50px] w-[60px]" />
                <T w={466} className="mt-[2px] ml-[34px] text-[46px] text-[#9d9d9d]">ThirdPersonCharacter</T>
                <svg viewBox="0 0 26 40" className="ml-[17px] h-10 w-[26px]">
                  <path d="M4 2L21 20L4 38" fill="none" stroke="#cfcfcf" strokeWidth="4.500" />
                </svg>
                <T w={256} className="mb-[3px] ml-[22px] text-[46px] text-[#9d9d9d]">Event Graph</T>
                <T w={174} stretch className="mr-[15px] mb-[18px] ml-auto text-[54px] font-bold text-[#424242]">Zoom -5</T>
              </div>
            </div>
          </div>
        </div>
        <div className="ml-3 flex grow flex-col">
          <div className="mt-[3px] ml-[10px] flex h-[54px] items-start">
            <div className="h-full w-[27px] shrink-0 rounded-t-[3px] bg-[#3e3e3e]" />
            <svg viewBox="0 0 36 40" className="mt-[4px] -ml-3 h-10 w-9 shrink-0">
              <circle cx="18" cy="19" r="15" fill="#4c4c4c" stroke="#6f86cf" strokeWidth="3" />
              <path d="M15 9H20V13H15ZM13 16H20V26H23V29H13V26H16V19H13Z" fill="#e8e8e8" />
            </svg>
          </div>
          <div className="grow border-l border-[#4a4a4a] bg-[#3e3e3e]" />
        </div>
      </div>
    </div>
  );
}
